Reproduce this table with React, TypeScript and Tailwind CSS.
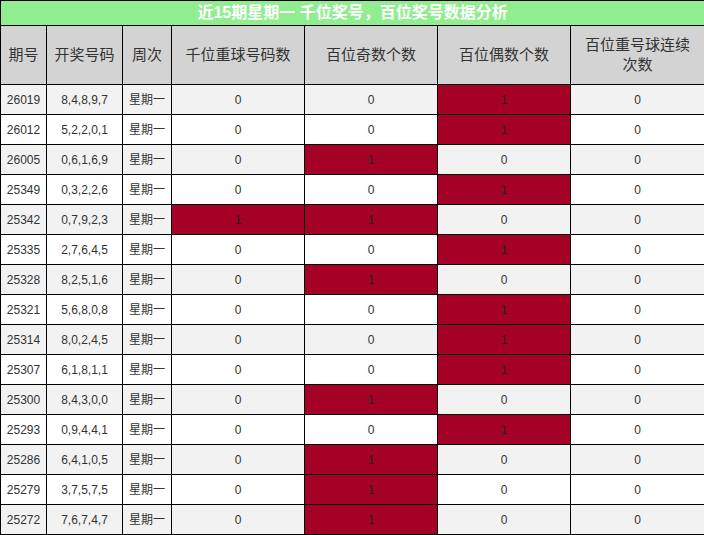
const rows: [string, string, number, number, number, number][] = [
  ["26019", "8,4,8,9,7", 0, 0, 1, 0],
  ["26012", "5,2,2,0,1", 0, 0, 1, 0],
  ["26005", "0,6,1,6,9", 0, 1, 0, 0],
  ["25349", "0,3,2,2,6", 0, 0, 1, 0],
  ["25342", "0,7,9,2,3", 1, 1, 0, 0],
  ["25335", "2,7,6,4,5", 0, 0, 1, 0],
  ["25328", "8,2,5,1,6", 0, 1, 0, 0],
  ["25321", "5,6,8,0,8", 0, 0, 1, 0],
  ["25314", "8,0,2,4,5", 0, 0, 1, 0],
  ["25307", "6,1,8,1,1", 0, 0, 1, 0],
  ["25300", "8,4,3,0,0", 0, 1, 0, 0],
  ["25293", "0,9,4,4,1", 0, 0, 1, 0],
  ["25286", "6,4,1,0,5", 0, 1, 0, 0],
  ["25279", "3,7,5,7,5", 0, 1, 0, 0],
  ["25272", "7,6,7,4,7", 0, 1, 0, 0],
]

const headers = [
  "期号",
  "开奖号码",
  "周次",
  "千位重球号码数",
  "百位奇数个数",
  "百位偶数个数",
  "百位重号球连续次数",
]

export default function App() {
  return (
    <div
      className="w-[704px] bg-white text-[#333]"
      style={{ fontFamily: '"Liberation Sans", "Noto Sans CJK SC", sans-serif' }}
    >
      <table className="w-[704px] table-fixed border-collapse border border-black">
        <colgroup>
          <col className="w-[46px]" />
          <col className="w-[76px]" />
          <col className="w-[49px]" />
          <col className="w-[133px]" />
          <col className="w-[133px]" />
          <col className="w-[133px]" />
          <col className="w-[134px]" />
        </colgroup>
        <thead>
          <tr className="h-[25px]">
            <th
              colSpan={7}
              className="border border-black bg-[#90ee90] p-0 text-center text-[16px] leading-[24px] font-bold text-white"
            >
              近15期星期一 千位奖号，百位奖号数据分析
            </th>
          </tr>
          <tr className="h-[59px]">
            {headers.map((h, i) => (
              <th
                key={h}
                className={
                  i < 3
                    ? "border border-black bg-[#d3d3d3] px-0 py-0 text-center text-[15px] leading-[20px] font-normal whitespace-nowrap"
                    : "border border-black bg-[#d3d3d3] px-3 py-0 text-center text-[15px] leading-[20px] font-normal"
                }
              >
                {h}
              </th>
            ))}
          </tr>
        </thead>
        <tbody>
          {rows.map((r, i) => (
            <tr
              key={r[0]}
              className={i % 2 === 0 ? "h-[30px] bg-[#f2f2f2]" : "h-[30px] bg-white"}
            >
              <td className="border border-black p-0 text-center text-[12px]">{r[0]}</td>
              <td className="border border-black p-0 text-center text-[12px]">{r[1]}</td>
              <td className="border border-black p-0 text-center text-[12px]">星期一</td>
              {r.slice(2).map((v, j) => (
                <td
                  key={j}
                  className={
                    v === 1
                      ? "border border-black bg-[#a50026] p-0 text-center text-[12px] text-[#222]"
                      : "border border-black p-0 text-center text-[12px]"
                  }
                >
                  {v}
                </td>
              ))}
            </tr>
          ))}
        </tbody>
      </table>
    </div>
  )
}
